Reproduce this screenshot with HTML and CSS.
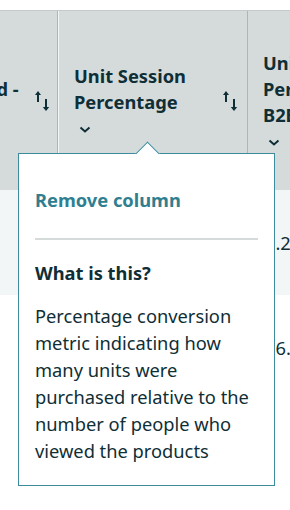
FILE: index.html
```html
<!DOCTYPE html>
<html>
    <head>
        <title>Unit Session Percentage</title>
        <link rel="stylesheet" href="styles.css">
    </head>
    <body>
        <div class="table">
            <div class="head-row">
                <div class="cell-a head-cell">
                    <div class="head-text">
                        <div class="label">Ordered -</div>
                        <svg class="chevron" width="12" height="8" viewBox="0 0 12 8"><path d="M1.5 1.5 L6 5.5 L10.5 1.5" fill="none" stroke="#0f2e36" stroke-width="2"/></svg>
                    </div>
                    <svg class="sort" width="16" height="22" viewBox="0 0 16 22"><path d="M3 4 V12" stroke="#0f2e36" stroke-width="2"/><path d="M0 5 L3 1 L6 5 Z" fill="#0f2e36"/><path d="M11 9 V18" stroke="#0f2e36" stroke-width="2"/><path d="M7.8 17 L11 21 L14.2 17 Z" fill="#0f2e36"/></svg>
                </div>
                <div class="cell-b head-cell">
                    <div class="head-text">
                        <div class="label">Unit Session<br>Percentage</div>
                        <svg class="chevron" width="12" height="8" viewBox="0 0 12 8"><path d="M1.5 1.5 L6 5.5 L10.5 1.5" fill="none" stroke="#0f2e36" stroke-width="2"/></svg>
                    </div>
                    <svg class="sort" width="16" height="22" viewBox="0 0 16 22"><path d="M3 4 V12" stroke="#0f2e36" stroke-width="2"/><path d="M0 5 L3 1 L6 5 Z" fill="#0f2e36"/><path d="M11 9 V18" stroke="#0f2e36" stroke-width="2"/><path d="M7.8 17 L11 21 L14.2 17 Z" fill="#0f2e36"/></svg>
                </div>
                <div class="cell-c head-cell">
                    <div class="head-text">
                        <div class="label">Unit<br>Percentage<br>B2B</div>
                        <svg class="chevron" width="12" height="8" viewBox="0 0 12 8"><path d="M1.5 1.5 L6 5.5 L10.5 1.5" fill="none" stroke="#0f2e36" stroke-width="2"/></svg>
                    </div>
                </div>
            </div>
            <div class="body-row shaded">
                <div class="cell-a"></div>
                <div class="cell-b"></div>
                <div class="cell-c body-cell">0.25%</div>
            </div>
            <div class="body-row">
                <div class="cell-a"></div>
                <div class="cell-b"></div>
                <div class="cell-c body-cell">16.54%</div>
            </div>
        </div>

        <div class="popover">
            <div class="remove">Remove column</div>
            <div class="divider"></div>
            <div class="what">What is this?</div>
            <p class="desc">Percentage conversion metric indicating how many units were purchased relative to the number of people who viewed the products</p>
        </div>
    </body>
</html>
```

FILE: styles.css
```css
body {
    margin: 0;
    width: 290px;
    height: 510px;
    overflow: hidden;
    position: relative;
    background-color: #ffffff;
    font-family: "Noto Sans", sans-serif;
    color: #0f2e36;
}
.table {
    margin-top: 10px;
    margin-left: -82px;
    width: 500px;
}
.head-row {
    display: flex;
    height: 179px;
    background-color: #d5dbdb;
    border-top: 1px solid #c3cbcc;
}
.cell-a {
    width: 140px;
    flex: none;
    box-sizing: border-box;
}
.cell-b {
    width: 190px;
    flex: none;
    box-sizing: border-box;
}
.cell-c {
    flex: 1;
    box-sizing: border-box;
}
.head-cell {
    display: flex;
    align-items: center;
    font-weight: bold;
    font-size: 18.3px;
    line-height: 26px;
}
.head-row .cell-a {
    border-right: 1px solid #aab7b8;
    padding: 0 6px 3px 15px;
}
.head-row .cell-b {
    border-left: 1px solid #f4f6f6;
    border-right: 1px solid #aab7b8;
    padding: 0 8px 3px 15px;
}
.head-row .cell-c {
    padding: 0 0 3px 15px;
}
.head-text {
    flex: 1;
    white-space: nowrap;
}
.chevron {
    display: block;
    margin: 11px 0 2px 5px;
}
.sort {
    flex: none;
    margin-top: 4px;
}
.body-row {
    display: flex;
    height: 105px;
}
.shaded {
    background-color: #f3f6f6;
}
.body-cell {
    display: flex;
    align-items: center;
    padding-left: 17px;
    font-size: 18.3px;
}
.popover {
    position: absolute;
    left: 18px;
    top: 153px;
    width: 257px;
    box-sizing: border-box;
    padding: 33px 16px 21px 16px;
    background-color: #ffffff;
    border: 1px solid #3d8b9c;
}
.popover::before {
    content: "";
    position: absolute;
    left: 120px;
    top: -9px;
    width: 16px;
    height: 16px;
    background-color: #ffffff;
    border-top: 1px solid #3d8b9c;
    border-left: 1px solid #3d8b9c;
    transform: rotate(45deg);
}
.remove {
    color: #2f7f90;
    font-weight: bold;
    font-size: 18.3px;
    line-height: 26px;
}
.divider {
    height: 2px;
    background-color: #d5dbdb;
    margin-top: 25px;
}
.what {
    margin-top: 20px;
    font-weight: bold;
    font-size: 18.3px;
    line-height: 26px;
}
.desc {
    margin: 16px 0 0 0;
    font-size: 18.3px;
    line-height: 27px;
}
```
